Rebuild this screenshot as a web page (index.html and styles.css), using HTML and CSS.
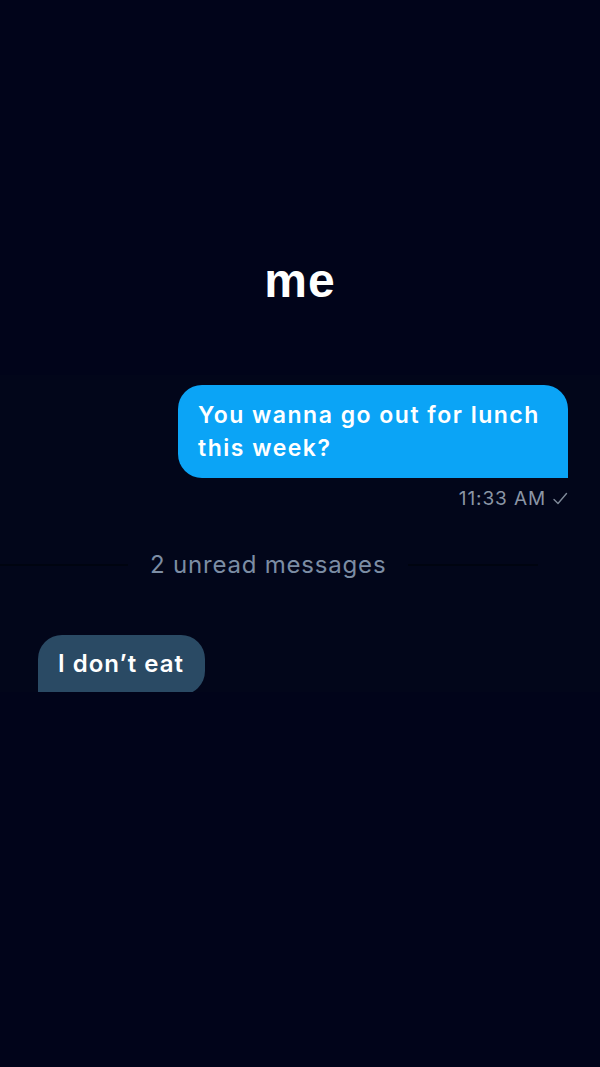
FILE: index.html
```html
<!DOCTYPE html>
<html lang="en">
<head>
<meta charset="utf-8">
<title>me</title>
<link rel="stylesheet" href="styles.css">
</head>
<body>
  <main class="screen">
    <h1 class="title">me</h1>
    <section class="chat">
      <div class="row row-out">
        <div class="bubble bubble-out">You wanna go out for lunch this week?</div>
      </div>
      <div class="meta">
        <span class="time">11:33 AM</span>
        <svg class="tick" width="16" height="14" viewBox="0 0 16 14" aria-hidden="true">
          <path d="M2 7.5 L6 11.5 L14.5 1.5" fill="none" stroke="#7f8a99" stroke-width="1.4" stroke-linecap="round" stroke-linejoin="round"/>
        </svg>
      </div>
      <div class="divider">
        <span class="divider-line"></span>
        <span class="divider-text">2 unread messages</span>
        <span class="divider-line divider-line-right"></span>
      </div>
      <div class="row row-in">
        <div class="bubble bubble-in">I don’t eat</div>
      </div>
    </section>
  </main>
</body>
</html>
```

FILE: styles.css
```css
* {
  box-sizing: border-box;
}

html, body {
  margin: 0;
  padding: 0;
  background: #01041a;
}

.screen {
  width: 600px;
  height: 1067px;
  overflow: hidden;
  background: #01041a;
  font-family: Inter, "Noto Sans", "Liberation Sans", sans-serif;
  display: flex;
  flex-direction: column;
}

.title {
  margin: 253px 0 0;
  height: 56px;
  line-height: 56px;
  text-align: center;
  font-family: "Liberation Sans", Arial, sans-serif;
  font-weight: 700;
  font-size: 48px;
  color: #ffffff;
  letter-spacing: 1px;
}

.chat {
  margin-top: 66px;
  height: 317px;
  overflow: hidden;
  background: #02061a;
  padding-top: 10px;
  display: flex;
  flex-direction: column;
}

.row {
  display: flex;
}

.row-out {
  justify-content: flex-end;
  padding-right: 32px;
}

.row-in {
  justify-content: flex-start;
  padding-left: 38px;
  margin-top: 55px;
}

.bubble {
  color: #ffffff;
  font-weight: 600;
  line-height: 33px;
  letter-spacing: 1px;
}

.bubble-out {
  width: 390px;
  padding: 13.5px 20px;
  font-size: 23px;
  letter-spacing: 1.5px;
  background: #0ba4f6;
  border-radius: 24px 24px 0 24px;
}

.bubble-in {
  padding: 12px 21px 15px 20px;
  font-size: 24px;
  background: #2a4a64;
  border-radius: 24px 24px 24px 0;
}

.meta {
  margin-top: 10px;
  padding-right: 32px;
  display: flex;
  justify-content: flex-end;
  align-items: center;
  gap: 6px;
  height: 22px;
  color: #8a95a5;
  font-size: 19px;
  line-height: 22px;
  letter-spacing: 0.9px;
}

.tick {
  display: block;
}

.divider {
  margin-top: 40px;
  height: 30px;
  display: flex;
  align-items: center;
}

.divider-line {
  width: 128px;
  height: 2px;
  background: #000410;
}

.divider-line-right {
  width: 130px;
}

.divider-text {
  padding: 0 22px;
  font-size: 24px;
  line-height: 30px;
  letter-spacing: 0.8px;
  color: #7c8da4;
}
```
